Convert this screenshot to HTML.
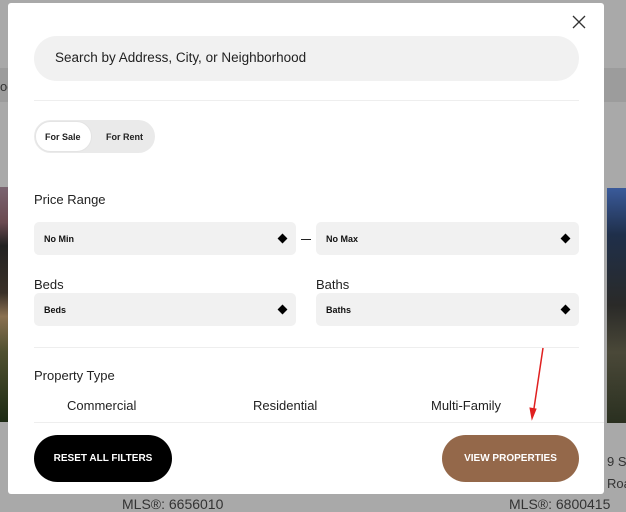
<!DOCTYPE html>
<html><head><meta charset="utf-8"><style>
*{margin:0;padding:0;box-sizing:border-box}
body{width:626px;height:512px;overflow:hidden;background:#a9a9a9;font-family:"Liberation Sans",sans-serif;position:relative}
.band{position:absolute;left:0;top:68px;width:626px;height:34px;background:#9c9c9c}
.photoL{position:absolute;left:0;top:187px;width:8px;height:235px;background:linear-gradient(#7a6470 0%,#6a4a50 15%,#222 25%,#3a3028 45%,#8a7050 55%,#505030 70%,#1d2a14 100%)}
.photoR{position:absolute;left:607px;top:188px;width:19px;height:235px;background:linear-gradient(#3a5a9a 0%,#1f2f4a 20%,#2a2a28 50%,#4a4838 70%,#2a3020 100%)}
.scroll{position:absolute;left:604px;top:3px;width:3px;height:225px;background:#888}
.mls{position:absolute;top:496px;font-size:14px;color:#333;white-space:nowrap}
.modal{position:absolute;left:8px;top:3px;width:596px;height:491px;background:#fff;border-radius:3px}
.close{position:absolute;left:564px;top:12px}
.search{position:absolute;left:26px;top:33px;width:545px;height:45px;background:#f1f1f1;border-radius:23px;font-size:13.5px;color:#222;padding:14px 0 0 21px}
.hr{position:absolute;left:26px;width:545px;height:1px;background:#eee}
.toggle{position:absolute;left:26px;top:117px;width:121px;height:33px;background:#eaeaea;border-radius:17px}
.toggle .on{position:absolute;left:1px;top:1px;width:57px;height:31px;background:#fff;border-radius:16px;border:1px solid #e4e4e4}
.toggle span{position:absolute;top:12px;font-size:9px;font-weight:bold;color:#222}
.lbl{position:absolute;font-size:13px;color:#222}
.sel{position:absolute;height:33px;background:#f1f1f1;border-radius:5px;font-size:9px;font-weight:bold;color:#111}
.sel span{position:absolute;left:10px;top:12px}
.sel i{position:absolute;right:10px;top:13px;width:7px;height:7px;background:#000;transform:rotate(45deg)}
.pt{position:absolute;font-size:13px;color:#222}
.btn{position:absolute;top:432px;height:47px;border-radius:24px;color:#fff;font-size:10px;font-weight:bold;text-align:center;line-height:47px}
</style></head><body>
<div class="band"></div>
<div style="position:absolute;left:0;top:79px;font-size:13px;color:#333">od</div>
<div class="photoL"></div><div class="photoR"></div>
<div class="mls" style="left:122px">MLS®: 6656010</div>
<div class="mls" style="left:509px">MLS®: 6800415</div>
<div style="position:absolute;left:607px;top:454px;font-size:13px;color:#333;white-space:nowrap">9 Sc</div>
<div style="position:absolute;left:607px;top:476px;font-size:13px;color:#333;white-space:nowrap">Roa</div>
<div class="modal">
<svg class="close" width="14" height="14" viewBox="0 0 14 14"><path d="M1 1L13 13M13 1L1 13" stroke="#333" stroke-width="1.3"/></svg>
<div class="search">Search by Address, City, or Neighborhood</div>
<div class="hr" style="top:97px"></div>
<div class="toggle"><div class="on"></div><span style="left:11px">For Sale</span><span style="left:72px">For Rent</span></div>
<div class="lbl" style="left:26px;top:189px">Price Range</div>
<div class="sel" style="left:26px;top:219px;width:262px"><span>No Min</span><i></i></div>
<div style="position:absolute;left:293px;top:236px;width:10px;height:1px;background:#222"></div>
<div class="sel" style="left:308px;top:219px;width:263px"><span>No Max</span><i></i></div>
<div class="lbl" style="left:26px;top:274px">Beds</div>
<div class="lbl" style="left:308px;top:274px">Baths</div>
<div class="sel" style="left:26px;top:290px;width:262px"><span>Beds</span><i></i></div>
<div class="sel" style="left:308px;top:290px;width:263px"><span>Baths</span><i></i></div>
<div class="hr" style="top:344px"></div>
<div class="lbl" style="left:26px;top:365px">Property Type</div>
<div class="pt" style="left:59px;top:395px">Commercial</div>
<div class="pt" style="left:245px;top:395px">Residential</div>
<div class="pt" style="left:423px;top:395px">Multi-Family</div>
<div class="hr" style="top:419px;left:26px;width:570px"></div>
<div class="btn" style="left:26px;width:138px;background:#000">RESET ALL FILTERS</div>
<div class="btn" style="left:434px;width:137px;background:#94684a">VIEW PROPERTIES</div>
</div>
<svg style="position:absolute;left:525px;top:345px" width="25" height="80"><path d="M18 3L8 70" stroke="#e02020" stroke-width="1.5"/><path d="M5 63L7 74L11 64Z" stroke="#e02020" stroke-width="1" fill="#e02020"/></svg>
</body></html>
